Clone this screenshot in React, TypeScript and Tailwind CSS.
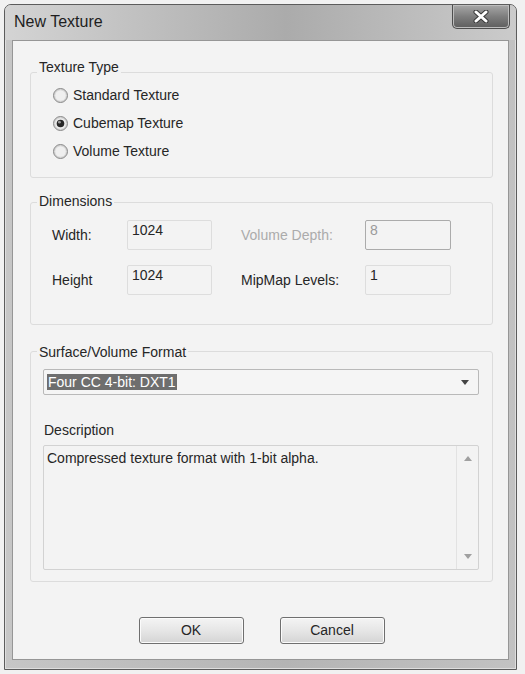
import React from "react";

function Radio({ checked, label }: { checked?: boolean; label: string }) {
  return (
    <div className="h-[28px] flex items-center gap-[5px]">
      <svg width="15" height="15" viewBox="0 0 15 15" className="shrink-0">
        <circle cx="7.5" cy="7.5" r="7" fill="#d4d4d4" stroke="#8a8a8a" />
        <circle cx="7.5" cy="7.5" r="5.3" fill="#efefef" />
        {checked ? (
          <>
            <circle cx="7.5" cy="7.5" r="3.8" fill="#262626" />
            <circle cx="6.4" cy="6.2" r="1.4" fill="#9a9a9a" />
          </>
        ) : null}
      </svg>
      <span>{label}</span>
    </div>
  );
}

function Group({
  label,
  labelTop,
  className,
  children,
}: {
  label: string;
  labelTop: string;
  className: string;
  children: React.ReactNode;
}) {
  return (
    <div className={"relative border border-[#dcdcdc] rounded-[3px] " + className}>
      <span className={"absolute left-[6px] px-[2px] bg-[#f3f3f3] leading-[16px] " + labelTop}>
        {label}
      </span>
      {children}
    </div>
  );
}

function Field({ value, disabled }: { value: string; disabled?: boolean }) {
  return (
    <div
      className={
        "h-[30px] rounded-[2px] border pl-[4px] pt-[1px] leading-[16px] " +
        (disabled ? "w-[86px] border-[#ababab] text-[#9a9a9a]" : "w-[85px] border-[#dddddd]")
      }
    >
      {value}
    </div>
  );
}

function Btn({ label }: { label: string }) {
  return (
    <div className="w-[105px] h-[27px] rounded-[3px] border border-[#6f6f6f] bg-linear-to-b from-[#f4f4f4] via-[#e6e6e6] via-50% to-[#d4d4d4] flex items-center justify-center shadow-[inset_0_0_0_1px_#fbfbfb]">
      {label}
    </div>
  );
}

export default function App() {
  return (
    <div
      className="w-[525px] h-[674px] bg-[#f1f1f1] pt-[4px] pl-[4px] text-[14px] text-[#262626]"
      style={{ fontFamily: '"Liberation Sans", Arial, sans-serif' }}
    >
      <div className="w-[513px] h-[666px] rounded-t-[7px] border border-[#5c5c5c] bg-linear-to-r from-[#c6c6c6] via-[#b4b4b4] via-55% to-[#c2c2c2] flex flex-col pb-[9px] shadow-[inset_0_0_0_1px_#dedede]">
        <div className="h-[35px] relative flex items-center pl-[9px] pb-[1px] bg-linear-to-r from-[#d4d4d4] via-[#ababab] via-55% to-[#cbcbcb] rounded-t-[6px]">
          <span className="text-[16px] text-[#1e1e1e]">New Texture</span>
          <div className="absolute top-0 right-[6px] w-[58px] h-[24px] rounded-b-[5px] border border-t-0 border-[#4e4e4e] bg-linear-to-b from-[#a8a8a8] via-[#7e7e7e] to-[#5e5e5e] flex items-center justify-center shadow-[inset_0_0_0_1px_#bdbdbd]">
            <svg width="16" height="13" viewBox="0 0 16 13">
              <path d="M3 2 L13 11 M13 2 L3 11" stroke="#3a3a3a" strokeWidth="5" strokeLinecap="round" />
              <path d="M3 2 L13 11 M13 2 L3 11" stroke="#ffffff" strokeWidth="3" strokeLinecap="round" />
            </svg>
          </div>
        </div>
        <div className="flex-1 mx-[7px] border border-[#969696] bg-[#f3f3f3] pl-[17px] pr-[15px] pt-[31px] flex flex-col">
          <Group label="Texture Type" labelTop="-top-[14px]" className="pt-[8px] pb-[12px] pl-[22px]">
            <Radio label="Standard Texture" />
            <Radio label="Cubemap Texture" checked />
            <Radio label="Volume Texture" />
          </Group>

          <Group label="Dimensions" labelTop="-top-[10px]" className="mt-[24px] pt-[17px] pb-[29px] pl-[21px] flex flex-col gap-[15px]">
            <div className="flex items-center">
              <span className="w-[75px]">Width:</span>
              <Field value="1024" />
              <span className="ml-[29px] w-[124px] text-[#ababab]">Volume Depth:</span>
              <Field value="8" disabled />
            </div>
            <div className="flex items-center">
              <span className="w-[75px]">Height</span>
              <Field value="1024" />
              <span className="ml-[29px] w-[124px]">MipMap Levels:</span>
              <div className="w-[86px] h-[30px] rounded-[2px] border border-[#dddddd] pl-[4px] pt-[1px] leading-[16px]">1</div>
            </div>
          </Group>

          <Group label="Surface/Volume Format" labelTop="-top-[8px]" className="mt-[26px] pt-[17px] pb-[11px] pl-[12px] pr-[13px]">
            <div className="h-[26px] border border-[#b9b9b9] rounded-[2px] bg-[#f5f5f5] flex items-center pl-[3px] pr-[9px]">
              <span className="bg-[#6e6e6e] text-white leading-[16px] px-px">Four CC 4-bit: DXT1</span>
              <svg width="8" height="5" viewBox="0 0 8 5" className="ml-auto">
                <path d="M0 0 H8 L4 5 Z" fill="#444444" />
              </svg>
            </div>
            <div className="mt-[27px] pl-px leading-[16px]">Description</div>
            <div className="mt-[7px] h-[125px] border border-[#d2d2d2] rounded-[2px] flex">
              <div className="flex-1 pl-[3px] pt-[4px] leading-[16px]">Compressed texture format with 1-bit alpha.</div>
              <div className="w-[22px] border-l border-[#e2e2e2] flex flex-col items-center justify-between pt-[10px] pb-[10px]">
                <svg width="8" height="5" viewBox="0 0 8 5">
                  <path d="M0 5 H8 L4 0 Z" fill="#a0a0a0" />
                </svg>
                <svg width="8" height="5" viewBox="0 0 8 5">
                  <path d="M0 0 H8 L4 5 Z" fill="#a0a0a0" />
                </svg>
              </div>
            </div>
          </Group>

          <div className="mt-[35px] flex justify-center gap-[36px]">
            <Btn label="OK" />
            <Btn label="Cancel" />
          </div>
        </div>
      </div>
    </div>
  );
}
